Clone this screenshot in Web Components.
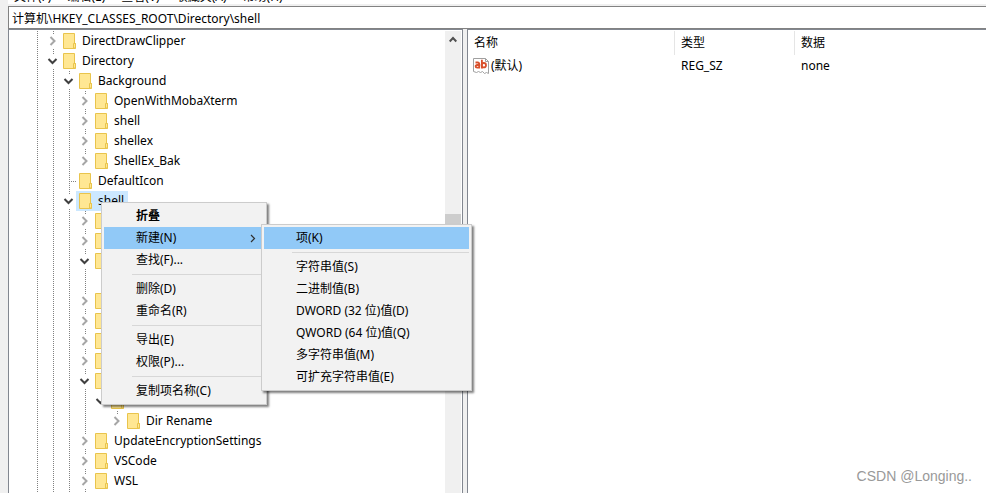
<!DOCTYPE html>
<html lang="zh-CN">
<head>
<meta charset="utf-8">
<title>注册表编辑器</title>
<style>
html,body{margin:0;height:100%}
body{font:12px/20px "Noto Sans","Noto Sans CJK SC",sans-serif;color:#000;background:#fff;overflow:hidden}
</style>
</head>
<body>
<registry-editor>
  <menu-strip slot="menu"></menu-strip>
  <address-bar slot="address" path="计算机\HKEY_CLASSES_ROOT\Directory\shell"></address-bar>
  <key-tree slot="tree">
    <tree-node label="DirectDrawClipper" state="closed"></tree-node>
    <tree-node label="Directory" state="open">
      <tree-node label="Background" state="open">
        <tree-node label="OpenWithMobaXterm" state="closed"></tree-node>
        <tree-node label="shell" state="closed"></tree-node>
        <tree-node label="shellex" state="closed"></tree-node>
        <tree-node label="ShellEx_Bak" state="closed" last></tree-node>
      </tree-node>
      <tree-node label="DefaultIcon" state="leaf"></tree-node>
      <tree-node label="shell" state="open" selected>
        <tree-node state="closed"></tree-node>
        <tree-node state="closed"></tree-node>
        <tree-node state="open">
          <tree-node state="leaf" last></tree-node>
        </tree-node>
        <tree-node state="closed"></tree-node>
        <tree-node state="closed"></tree-node>
        <tree-node state="closed"></tree-node>
        <tree-node state="closed"></tree-node>
        <tree-node state="open">
          <tree-node state="open" last>
            <tree-node label="Dir Rename" state="closed" last></tree-node>
          </tree-node>
        </tree-node>
        <tree-node label="UpdateEncryptionSettings" state="closed"></tree-node>
        <tree-node label="VSCode" state="closed"></tree-node>
        <tree-node label="WSL" state="closed"></tree-node>
        <tree-node state="closed"></tree-node>
      </tree-node>
    </tree-node>
  </key-tree>
  <value-list slot="values"></value-list>
</registry-editor>

<popup-menu class="context">
  <menu-entry strong>折叠</menu-entry>
  <menu-entry active submenu>新建(N)</menu-entry>
  <menu-entry>查找(F)...</menu-entry>
  <menu-rule></menu-rule>
  <menu-entry>删除(D)</menu-entry>
  <menu-entry>重命名(R)</menu-entry>
  <menu-rule></menu-rule>
  <menu-entry>导出(E)</menu-entry>
  <menu-entry>权限(P)...</menu-entry>
  <menu-rule></menu-rule>
  <menu-entry>复制项名称(C)</menu-entry>
</popup-menu>
<popup-menu class="new">
  <menu-entry active>项(K)</menu-entry>
  <menu-rule></menu-rule>
  <menu-entry>字符串值(S)</menu-entry>
  <menu-entry>二进制值(B)</menu-entry>
  <menu-entry>DWORD (32 位)值(D)</menu-entry>
  <menu-entry>QWORD (64 位)值(Q)</menu-entry>
  <menu-entry>多字符串值(M)</menu-entry>
  <menu-entry>可扩充字符串值(E)</menu-entry>
</popup-menu>
<water-mark>CSDN @Longing..</water-mark>

<script>
const define = (name, html, setup) => customElements.define(name, class extends HTMLElement {
  connectedCallback() {
    if (this.shadowRoot) return;
    this.attachShadow({ mode: 'open' }).innerHTML =
      '<style>*{box-sizing:border-box}button,input{font:inherit;color:inherit;border:0;padding:0;margin:0;background:none}</style>' + html;
    if (setup) setup(this, this.shadowRoot);
  }
});

define('registry-editor', `
<style>
:host{display:flex;height:100vh;background:#f0f0f0;padding-left:8px}
.window{flex:1;min-width:0;display:flex;flex-direction:column}
.panes{flex:1;min-height:0;display:grid;grid-template-columns:455px 4px minmax(0,1fr)}
.tree{display:flex;min-height:0;overflow:hidden;background:#fff;border:solid #828790;border-width:1px 1px 0 1px}
.values{background:#fff;border:solid #828790;border-width:1px 0 0 1px;overflow:hidden}
slot{display:block;flex:1;min-width:0}
.menu,.address{flex:none}
</style>
<div class="window">
  <slot class="menu" name="menu"></slot>
  <slot class="address" name="address"></slot>
  <main class="panes">
    <section class="tree"><slot name="tree"></slot></section>
    <div></div>
    <section class="values"><slot name="values"></slot></section>
  </main>
</div>`);

define('menu-strip', `
<style>
:host{display:flex;align-items:flex-end;gap:16px;height:4px;padding-left:6px;overflow:hidden;background:#fff}
button{flex:none;height:14px;line-height:14px;white-space:nowrap}
</style>
<button>文件(F)</button><button>编辑(E)</button><button>查看(V)</button><button>收藏夹(A)</button><button>帮助(H)</button>`);

define('address-bar', `
<style>
:host{display:block;padding-top:2px}
input{display:block;width:100%;height:23px;padding:0 3px;background:#fff;border:solid #828282;border-width:1px 0 1px 1px;outline:0}
</style>
<input aria-label="地址" spellcheck="false">`, (el, root) => {
  root.querySelector('input').value = el.getAttribute('path');
});

define('key-tree', `
<style>
:host{display:flex;height:100%;padding-top:1px}
.nodes{flex:1;min-width:0;padding-left:35px;overflow:hidden;
 background:repeating-linear-gradient(#808080 0 1px,transparent 1px 2px) 28px 0/1px 100% no-repeat}
.bar{flex:none;width:16px;margin-right:1px;background:#f0f0f0;display:flex;flex-direction:column}
.bar button{height:17px;display:grid;place-items:center}
.thumb{height:20px;margin-top:166px;background:#cdcdcd}
</style>
<div class="nodes" role="tree"><slot></slot></div>
<div class="bar"><button aria-label="向上滚动"><svg width="8" height="7" viewBox="0 0 8 7" fill="none" stroke="#505050" stroke-width="2"><path d="M.7 5.500 4 2 7.300 5.500"/></svg></button><div class="thumb"></div></div>`);

define('tree-node', `
<style>
:host{display:block;background:repeating-linear-gradient(#808080 0 1px,transparent 1px 2px) 9px 0/1px 100% no-repeat}
:host([last]){background-size:1px 10px}
.row{display:flex;height:20px;align-items:center;white-space:nowrap}
.toggle{flex:none;width:16px;height:20px;display:grid;place-items:center}
.toggle svg{background:#fff}
.stub{width:7px;height:1px;margin-left:9px;background:repeating-linear-gradient(90deg,#808080 0 1px,transparent 1px 2px)}
.item{display:flex;align-items:center;height:20px;padding:0 4px 0 3px;gap:6px}
.item svg{flex:none}
:host([selected]) .item{background:#cce8ff}
.kids{padding-left:16px}
</style>
<div class="row" role="treeitem"><span class="lead"></span><span class="item">
<svg width="13" height="16" viewBox="0 0 13 16"><path d="M.5.5h11v10h1v5H.5z" fill="#ffe793" stroke="#e9c44c"/><path d="M10.5 15V10.5h2V15z" fill="#ffe793" stroke="#e9c44c"/></svg>
<span class="label"></span></span></div>
<div class="kids"><slot></slot></div>`, (el, root) => {
  const state = el.getAttribute('state');
  root.querySelector('.label').textContent = el.getAttribute('label') || '';
  const art = state === 'open'
    ? '<svg width="11" height="14" viewBox="0 0 11 14" fill="none" stroke="#404040" stroke-width="2"><path d="M1.500 5 5.500 9 9.500 5"/></svg>'
    : '<svg width="11" height="14" viewBox="0 0 11 14" fill="none" stroke="#a6a6a6" stroke-width="2"><path d="M3.500 3 7.500 7 3.500 11"/></svg>';
  root.querySelector('.lead').outerHTML = state === 'leaf'
    ? '<span class="toggle"><span class="stub"></span></span>'
    : '<button class="toggle" aria-label="展开或折叠">' + art + '</button>';
});

define('value-list', `
<style>
:host{display:block;padding-top:1px}
table{width:100%;table-layout:fixed;border-collapse:separate;border-spacing:0;text-align:left}
th,td{padding:0 0 0 6px;font-weight:400;white-space:nowrap}
th{height:24px;border-right:1px solid #e5e5e5}
th:last-child{border:0}
td{height:22px}
.c1{width:207px}.c2{width:120px}
td:first-child{padding-left:5px}
.name{display:flex;align-items:center;gap:2px}
</style>
<table><colgroup><col class="c1"><col class="c2"><col></colgroup>
<thead><tr><th>名称</th><th>类型</th><th>数据</th></tr></thead>
<tbody><tr><td><span class="name"><svg width="16" height="16" viewBox="0 0 16 16"><path d="M.5.5h12l3 3v12l-2-1-2 1-2-2-2 1-2-1-2 1-3-1z" fill="#fff" stroke="#a0a0a0"/><path d="M12.5.5v3h3" fill="none" stroke="#a0a0a0"/><g fill="none" stroke="#d9502c" stroke-width="1.8"><path d="M2.500 4.500h2.200q1.500 0 1.500 1.500v4.500M6 7H4.200q-1.600 0-1.600 1.300T4.200 9.600H6M8.900 1.800v8.700"/><circle cx="10.800" cy="7.200" r="2.200"/></g></svg>(默认)</span></td><td>REG_SZ</td><td>none</td></tr></tbody></table>`);

define('popup-menu', `
<style>
:host{position:absolute;padding:2px;background:#f2f2f2;border:1px solid #ccc;box-shadow:2px 2px 2px rgba(0,0,0,.5);box-sizing:border-box}
:host(.context){left:101px;top:202px;width:166px}
:host(.new){left:261px;top:224px;width:211px}
</style><div role="menu"><slot></slot></div>`);

define('menu-entry', `
<style>
:host{display:block}
button{display:flex;align-items:center;justify-content:space-between;width:100%;height:22px;padding:0 8px 0 32px;white-space:nowrap;text-align:left}
:host([active]) button{background:#91c9f7}
:host([strong]) button{font-weight:700}
svg{display:none}
:host([submenu]) svg{display:block}
</style>
<button role="menuitem"><span><slot></slot></span><svg width="6" height="9" viewBox="0 0 6 9" fill="none" stroke="#303030" stroke-width="1.200"><path d="M1 1 4.500 4.500 1 8"/></svg></button>`);

define('menu-rule', `
<style>:host{display:block;height:1px;margin:3px 0 3px 28px;background:#d7d7d7}</style>`);

define('water-mark', `
<style>:host{position:absolute;right:14px;bottom:7px;font:14px/20px "Liberation Sans",sans-serif;color:#999}</style><slot></slot>`);
</script>
</body>
</html>
